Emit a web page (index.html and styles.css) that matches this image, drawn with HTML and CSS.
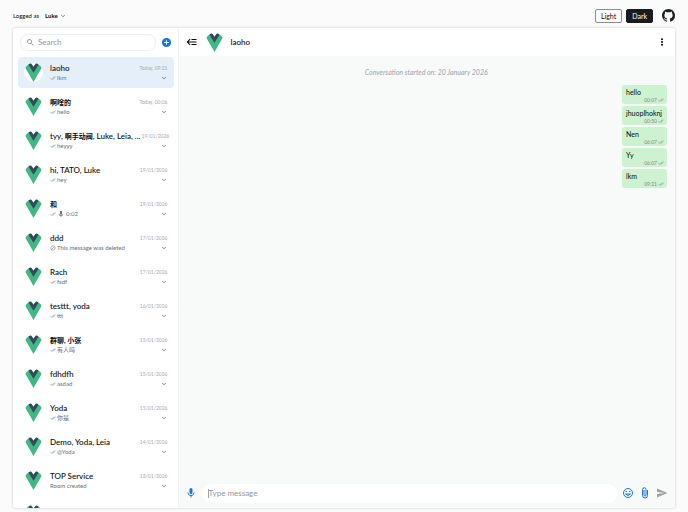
FILE: index.html
```html
<!DOCTYPE html>
<html lang="en">

<head>
    <meta charset="UTF-8">
    <meta name="viewport" content="width=device-width, initial-scale=1.0">
    <title>Chat</title>
    <link rel="stylesheet" href="styles.css">
</head>

<body>
    <!-- Shared icons -->
    <svg class="sprite" aria-hidden="true">
        <symbol id="logo" viewBox="0 0 262 227" preserveAspectRatio="xMidYMid slice">
            <path fill="#41b883" d="M161 0l-30 46L101 0H0l131 227L262 0z" />
            <path fill="#34495e" d="M166 0l-35 46L96 0H58l73 116L204 0z" />
        </symbol>
        <symbol id="check" viewBox="0 0 24 24">
            <path d="M18 7l-1.400-1.400-6.300 6.300 1.400 1.400L18 7zm4.200-1.400L11.700 16.200l-4.200-4.200-1.400 1.400L11.700 19 23.700 7l-1.500-1.400zM.4 13.400L6 19l1.400-1.400L1.800 12 .4 13.400z" />
        </symbol>
        <symbol id="chevron" viewBox="0 0 24 24">
            <path d="M7.400 8.600L12 13.200l4.600-4.600L18 10l-6 6-6-6z" />
        </symbol>
        <symbol id="mic" viewBox="0 0 24 24">
            <path d="M12 2a3 3 0 0 1 3 3v6a3 3 0 0 1-6 0V5a3 3 0 0 1 3-3m7 9c0 3.500-2.600 6.400-6 6.900V21h-2v-3.100c-3.400-.5-6-3.400-6-6.900h2a5 5 0 0 0 10 0h2z" />
        </symbol>
    </svg>

    <header class="top-bar">
        <div class="logged-as">
            <label for="user">Logged as</label>
            <span class="user-select">
                <select id="user">
                    <option>Luke</option>
                    <option>Leia</option>
                    <option>Yoda</option>
                </select>
                <svg class="icon-small"><use href="#chevron" /></svg>
            </span>
        </div>
        <div class="top-actions">
            <button class="button-theme button-light">Light</button>
            <button class="button-theme button-dark">Dark</button>
            <a class="github" href="#" aria-label="GitHub">
                <svg viewBox="0 0 16 16"><path d="M8 0C3.580 0 0 3.580 0 8c0 3.540 2.290 6.530 5.470 7.590.4.070.550-.170.550-.380 0-.190-.010-.820-.010-1.490-2.010.370-2.530-.490-2.690-.940-.090-.230-.480-.940-.820-1.130-.280-.150-.680-.520-.010-.530.630-.010 1.080.580 1.230.820.720 1.210 1.870.870 2.330.660.070-.520.280-.870.510-1.070-1.780-.2-3.640-.890-3.640-3.950 0-.870.310-1.590.820-2.150-.080-.2-.360-1.020.080-2.120 0 0 .670-.210 2.200.820.640-.180 1.320-.270 2-.270s1.360.090 2 .270c1.530-1.040 2.200-.820 2.200-.820.440 1.100.160 1.920.080 2.120.510.560.820 1.270.820 2.150 0 3.070-1.870 3.750-3.650 3.950.290.250.540.730.540 1.480 0 1.070-.010 1.930-.010 2.200 0 .210.150.460.550.380A8 8 0 0 0 16 8c0-4.420-3.580-8-8-8z" /></svg>
            </a>
        </div>
    </header>

    <main class="chat">
        <aside class="sidebar">
            <div class="search-bar">
                <div class="search-box">
                    <svg viewBox="0 0 24 24"><path d="M15.500 14h-.8l-.3-.3a6.500 6.500 0 1 0-.7.7l.3.3v.8l5 5 1.500-1.500-5-5zm-6 0a4.500 4.500 0 1 1 0-9 4.500 4.500 0 0 1 0 9z" /></svg>
                    <input type="text" placeholder="Search" aria-label="Search">
                </div>
                <button class="add-room" aria-label="Add room">
                    <svg viewBox="0 0 24 24"><path d="M17 13h-4v4h-2v-4H7v-2h4V7h2v4h4m-5-9a10 10 0 1 0 0 20 10 10 0 0 0 0-20z" /></svg>
                </button>
            </div>

            <ul class="rooms">
                <li class="room room-active">
                    <svg class="avatar"><use href="#logo" /></svg>
                    <div class="room-info">
                        <div class="room-line"><span class="room-name">laoho</span><span class="room-date">Today, 09:21</span></div>
                        <div class="room-line"><span class="room-text"><svg class="check"><use href="#check" /></svg>lkm</span><button class="room-menu" aria-label="Options"><svg class="icon-small"><use href="#chevron" /></svg></button></div>
                    </div>
                </li>
                <li class="room">
                    <svg class="avatar"><use href="#logo" /></svg>
                    <div class="room-info">
                        <div class="room-line"><span class="room-name"><b>啊啥的</b></span><span class="room-date">Today, 00:06</span></div>
                        <div class="room-line"><span class="room-text"><svg class="check"><use href="#check" /></svg>hello</span><button class="room-menu" aria-label="Options"><svg class="icon-small"><use href="#chevron" /></svg></button></div>
                    </div>
                </li>
                <li class="room">
                    <svg class="avatar"><use href="#logo" /></svg>
                    <div class="room-info">
                        <div class="room-line"><span class="room-name">tyy, <b>啊手动阀</b>, Luke, Leia, ...</span><span class="room-date">19/01/2026</span></div>
                        <div class="room-line"><span class="room-text"><svg class="check"><use href="#check" /></svg>heyyy</span><button class="room-menu" aria-label="Options"><svg class="icon-small"><use href="#chevron" /></svg></button></div>
                    </div>
                </li>
                <li class="room">
                    <svg class="avatar"><use href="#logo" /></svg>
                    <div class="room-info">
                        <div class="room-line"><span class="room-name">hi, TATO, Luke</span><span class="room-date">19/01/2026</span></div>
                        <div class="room-line"><span class="room-text"><svg class="check"><use href="#check" /></svg>hey</span><button class="room-menu" aria-label="Options"><svg class="icon-small"><use href="#chevron" /></svg></button></div>
                    </div>
                </li>
                <li class="room">
                    <svg class="avatar"><use href="#logo" /></svg>
                    <div class="room-info">
                        <div class="room-line"><span class="room-name"><b>和</b></span><span class="room-date">19/01/2026</span></div>
                        <div class="room-line"><span class="room-text"><svg class="check"><use href="#check" /></svg><svg class="room-mic"><use href="#mic" /></svg>0:02</span><button class="room-menu" aria-label="Options"><svg class="icon-small"><use href="#chevron" /></svg></button></div>
                    </div>
                </li>
                <li class="room">
                    <svg class="avatar"><use href="#logo" /></svg>
                    <div class="room-info">
                        <div class="room-line"><span class="room-name">ddd</span><span class="room-date">17/01/2026</span></div>
                        <div class="room-line"><span class="room-text"><svg class="deleted" viewBox="0 0 24 24"><circle cx="12" cy="12" r="9" /><path d="M18 6L6 18" /></svg>This message was deleted</span><button class="room-menu" aria-label="Options"><svg class="icon-small"><use href="#chevron" /></svg></button></div>
                    </div>
                </li>
                <li class="room">
                    <svg class="avatar"><use href="#logo" /></svg>
                    <div class="room-info">
                        <div class="room-line"><span class="room-name">Rach</span><span class="room-date">17/01/2026</span></div>
                        <div class="room-line"><span class="room-text"><svg class="check"><use href="#check" /></svg>fsdf</span><button class="room-menu" aria-label="Options"><svg class="icon-small"><use href="#chevron" /></svg></button></div>
                    </div>
                </li>
                <li class="room">
                    <svg class="avatar"><use href="#logo" /></svg>
                    <div class="room-info">
                        <div class="room-line"><span class="room-name">testtt, yoda</span><span class="room-date">16/01/2026</span></div>
                        <div class="room-line"><span class="room-text"><svg class="check"><use href="#check" /></svg>ttt</span><button class="room-menu" aria-label="Options"><svg class="icon-small"><use href="#chevron" /></svg></button></div>
                    </div>
                </li>
                <li class="room">
                    <svg class="avatar"><use href="#logo" /></svg>
                    <div class="room-info">
                        <div class="room-line"><span class="room-name"><b>群聊, 小张</b></span><span class="room-date">15/01/2026</span></div>
                        <div class="room-line"><span class="room-text"><svg class="check"><use href="#check" /></svg>有人吗</span><button class="room-menu" aria-label="Options"><svg class="icon-small"><use href="#chevron" /></svg></button></div>
                    </div>
                </li>
                <li class="room">
                    <svg class="avatar"><use href="#logo" /></svg>
                    <div class="room-info">
                        <div class="room-line"><span class="room-name">fdhdfh</span><span class="room-date">15/01/2026</span></div>
                        <div class="room-line"><span class="room-text"><svg class="check"><use href="#check" /></svg>asdad</span><button class="room-menu" aria-label="Options"><svg class="icon-small"><use href="#chevron" /></svg></button></div>
                    </div>
                </li>
                <li class="room">
                    <svg class="avatar"><use href="#logo" /></svg>
                    <div class="room-info">
                        <div class="room-line"><span class="room-name">Yoda</span><span class="room-date">15/01/2026</span></div>
                        <div class="room-line"><span class="room-text"><svg class="check"><use href="#check" /></svg>你是</span><button class="room-menu" aria-label="Options"><svg class="icon-small"><use href="#chevron" /></svg></button></div>
                    </div>
                </li>
                <li class="room">
                    <svg class="avatar"><use href="#logo" /></svg>
                    <div class="room-info">
                        <div class="room-line"><span class="room-name">Demo, Yoda, Leia</span><span class="room-date">14/01/2026</span></div>
                        <div class="room-line"><span class="room-text"><svg class="check"><use href="#check" /></svg>@Yoda</span><button class="room-menu" aria-label="Options"><svg class="icon-small"><use href="#chevron" /></svg></button></div>
                    </div>
                </li>
                <li class="room">
                    <svg class="avatar"><use href="#logo" /></svg>
                    <div class="room-info">
                        <div class="room-line"><span class="room-name">TOP Service</span><span class="room-date">13/01/2026</span></div>
                        <div class="room-line"><span class="room-text">Room created</span><button class="room-menu" aria-label="Options"><svg class="icon-small"><use href="#chevron" /></svg></button></div>
                    </div>
                </li>
                <li class="room">
                    <svg class="avatar"><use href="#logo" /></svg>
                </li>
            </ul>
        </aside>

        <section class="conversation">
            <header class="room-header">
                <button class="toggle" aria-label="Toggle rooms">
                    <svg viewBox="0 0 24 24"><path d="M5 13l4 4-1.400 1.400L1 12l6.600-6.400L9 7l-4 4h16v2H5m16-7v2H11V6h10m0 10v2H11v-2h10z" /></svg>
                </button>
                <svg class="avatar"><use href="#logo" /></svg>
                <h1>laoho</h1>
                <button class="header-menu" aria-label="Menu">
                    <svg viewBox="0 0 24 24"><circle cx="12" cy="4" r="3" /><circle cx="12" cy="12" r="3" /><circle cx="12" cy="20" r="3" /></svg>
                </button>
            </header>

            <div class="messages">
                <p class="started">Conversation started on: 20 January 2026</p>
                <div class="message">
                    <p>hello</p>
                    <span class="message-time">00:07<svg class="check"><use href="#check" /></svg></span>
                </div>
                <div class="message">
                    <p>jhuoplhoknj</p>
                    <span class="message-time">00:50<svg class="check"><use href="#check" /></svg></span>
                </div>
                <div class="message">
                    <p>Nen</p>
                    <span class="message-time">06:07<svg class="check"><use href="#check" /></svg></span>
                </div>
                <div class="message">
                    <p>Yy</p>
                    <span class="message-time">06:07<svg class="check"><use href="#check" /></svg></span>
                </div>
                <div class="message">
                    <p>lkm</p>
                    <span class="message-time">09:21<svg class="check"><use href="#check" /></svg></span>
                </div>
            </div>

            <form class="composer">
                <button type="button" class="record" aria-label="Record"><svg><use href="#mic" /></svg></button>
                <div class="message-box">
                    <input type="text" placeholder="Type message" aria-label="Message">
                </div>
                <button type="button" aria-label="Emoji">
                    <svg class="line-icon" viewBox="0 0 24 24"><circle cx="12" cy="12" r="9" /><path d="M7 14q5 6 10 0z" /><path d="M8.500 8v2M15.500 8v2" stroke-width="3" /></svg>
                </button>
                <button type="button" aria-label="Attach">
                    <svg class="line-icon" viewBox="0 0 24 24"><path d="M17 6v11a5 5 0 0 1-10 0V5a3.500 3.500 0 0 1 7 0v11a2 2 0 0 1-4 0V6" /></svg>
                </button>
                <button type="submit" class="send" aria-label="Send">
                    <svg viewBox="0 0 24 24"><path d="M2 21l21-9L2 3v7l15 2-15 2z" /></svg>
                </button>
            </form>
        </section>
    </main>
</body>

</html>
```

FILE: styles.css
```css
* {
    box-sizing: border-box;
}

body {
    margin: 0;
    height: 100vh;
    padding: 0 13px 4px;
    display: flex;
    flex-direction: column;
    background-color: #fbfbfb;
    color: #0a0a0a;
    font-family: Lato, "Noto Sans CJK SC", sans-serif;
    font-size: 8px;
    line-height: 10px;
}

button,
input,
select {
    font: inherit;
    color: inherit;
    border: none;
    background: none;
    padding: 0;
    outline: none;
}

button {
    display: flex;
    align-items: center;
    justify-content: center;
    cursor: pointer;
}

svg {
    display: block;
    flex-shrink: 0;
    fill: currentColor;
}

h1,
p,
ul {
    margin: 0;
    padding: 0;
}

.sprite {
    display: none;
}

.icon-small {
    width: 8px;
    height: 8px;
}

.check {
    width: 6px;
    height: 6px;
}

.avatar {
    width: 19px;
    height: 19px;
    border-radius: 50%;
    background-color: #fff;
}

/* Top bar */
.top-bar {
    flex-shrink: 0;
    height: 28px;
    padding-top: 3px;
    display: flex;
    align-items: center;
    justify-content: space-between;
}

.logged-as {
    display: flex;
    align-items: center;
    gap: 6px;
    font-size: 6px;
}

.user-select {
    display: flex;
    align-items: center;
    font-weight: bold;
}

.user-select select {
    appearance: none;
}

.user-select svg {
    color: #67717a;
}

.top-actions {
    display: flex;
    align-items: center;
    gap: 4px;
}

.button-theme {
    height: 14px;
    padding: 0 5px;
    border: 1px solid #1a1b1e;
    border-radius: 2px;
    font-size: 7px;
}

.button-light {
    border-color: #8b8d92;
    background-color: #fff;
}

.button-dark {
    background-color: #1a1b1e;
    color: #fff;
}

.github {
    margin-left: 5px;
    color: #1b1f23;
}

.github svg {
    width: 13px;
    height: 13px;
}

/* Chat card */
.chat {
    flex: 1;
    min-height: 0;
    display: flex;
    overflow: hidden;
    border-radius: 3px;
    background-color: #fff;
    box-shadow: 0 0 3px rgba(0, 0, 0, 0.2);
}

.sidebar {
    width: 25%;
    display: flex;
    flex-direction: column;
    border-right: 1px solid #f0f1f2;
}

.search-bar {
    flex-shrink: 0;
    height: 28px;
    padding: 0 6px 0 7px;
    display: flex;
    align-items: center;
    gap: 5px;
}

.search-box {
    flex: 1;
    min-width: 0;
    height: 17px;
    padding: 0 5px;
    display: flex;
    align-items: center;
    gap: 3px;
    border: 1px solid #eceff1;
    border-radius: 8px;
    color: #8d959c;
}

.search-box svg {
    width: 9px;
    height: 9px;
}

.search-box input,
.message-box input {
    flex: 1;
    min-width: 0;
}

input::placeholder {
    color: #8f979d;
}

.add-room {
    color: #1976d2;
}

.add-room svg {
    width: 11px;
    height: 11px;
}

.rooms {
    flex: 1;
    min-height: 0;
    padding: 1px 4px 0 5px;
    overflow: hidden;
    list-style: none;
}

.room {
    height: 31px;
    margin-bottom: 3px;
    padding: 0 6px;
    display: flex;
    align-items: center;
    gap: 7px;
    border-radius: 4px;
}

.room-active {
    background-color: #e5effa;
}

.room-info {
    flex: 1;
    min-width: 0;
}

.room-line {
    height: 10px;
    display: flex;
    align-items: center;
    justify-content: space-between;
    gap: 1px;
}

.room-name {
    font-weight: 500;
    white-space: nowrap;
}

.room-name b {
    font-size: 7px;
}

.room-date {
    color: #a3aab1;
    font-size: 5px;
    white-space: nowrap;
}

.room-text {
    display: flex;
    align-items: center;
    gap: 1px;
    color: #67717a;
    font-size: 6px;
}

.room-text .check,
.message-time .check {
    color: #8a949b;
}

.room-mic {
    width: 8px;
    height: 8px;
}

.deleted {
    width: 6px;
    height: 6px;
    fill: none;
    stroke: currentColor;
    stroke-width: 2;
}

.room-menu {
    color: #67717a;
}

/* Conversation */
.conversation {
    flex: 1;
    min-width: 0;
    display: flex;
    flex-direction: column;
    background-color: #f8f9f9;
}

.room-header {
    flex-shrink: 0;
    height: 28px;
    padding: 0 7px;
    display: flex;
    align-items: center;
    gap: 7px;
    background-color: #fff;
}

.room-header h1 {
    flex: 1;
    font-size: 8px;
    font-weight: 500;
}

.toggle svg {
    width: 12px;
    height: 12px;
}

.header-menu svg {
    width: 12px;
    height: 8px;
}

.messages {
    flex: 1;
    min-height: 0;
    padding: 11px 8px 11px 7px;
    display: flex;
    flex-direction: column;
    align-items: flex-end;
    gap: 2px;
    overflow: hidden;
}

.started {
    align-self: center;
    margin-bottom: 6px;
    color: #9ca3a9;
    font-size: 7px;
    font-style: italic;
}

.message {
    min-width: 45px;
    height: 19px;
    padding: 3px 3px 0 4px;
    border-radius: 3px;
    background-color: #ccf2cf;
    font-size: 7px;
    line-height: 9px;
}

.message-time {
    display: flex;
    align-items: center;
    justify-content: flex-end;
    gap: 1px;
    color: #7f8f85;
    font-size: 5px;
    line-height: 6px;
}

.composer {
    flex-shrink: 0;
    height: 30px;
    padding: 0 7px 0 6px;
    display: flex;
    align-items: center;
    gap: 5px;
    color: #1976d2;
}

.composer svg {
    width: 12px;
    height: 12px;
}

.composer .send {
    color: #9ca3a6;
}

.message-box {
    flex: 1;
    min-width: 0;
    height: 19px;
    padding: 0 6px;
    display: flex;
    align-items: center;
    border-radius: 10px;
    background-color: #fff;
    color: #0a0a0a;
}

/* Text cursor */
.message-box::before {
    content: "";
    width: 1px;
    height: 9px;
    background-color: #8fa5b5;
}

.line-icon {
    fill: none;
    stroke: currentColor;
    stroke-width: 2;
}
```
